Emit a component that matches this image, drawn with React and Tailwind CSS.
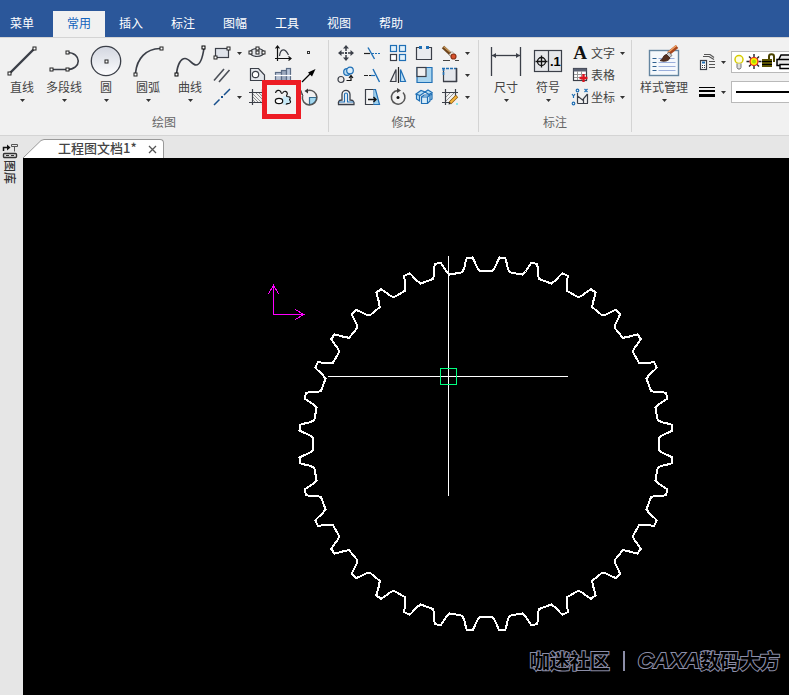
import React, { useState } from 'react';

const MENU = ['常用', '插入', '标注', '图幅', '工具', '视图', '帮助'];

const DARK = '#3b3f48';
const BLUE = '#1f6fb5';

function Icon({ size = 18, label, children }) {
  return (
    <svg width={size} height={size} viewBox={`0 0 ${size} ${size}`} fill="none" stroke={DARK} strokeWidth="1.2" aria-label={label} className="shrink-0 overflow-visible">
      {children}
    </svg>
  );
}

function Node({ x, y, color = '#222' }) {
  return <rect x={x - 1.5} y={y - 1.5} width="3" height="3" fill="#fff" stroke={color} strokeWidth="1" />;
}

function Caret() {
  return (
    <svg width="5" height="3" viewBox="0 0 5 3" className="shrink-0">
      <path d="M0 0h5L2.5 3z" fill="#333" />
    </svg>
  );
}

const big = {
  line: (
    <Icon size={32}>
      <path d="M3.5 28.5 28.5 3.5" strokeWidth="2.4" />
      <Node x={3.5} y={28.5} />
      <Node x={28.5} y={3.5} />
    </Icon>
  ),
  polyline: (
    <Icon size={32}>
      <path d="M3 24.5H19C34 24.5 34 7.5 19 7.5" strokeWidth="1.6" />
      <Node x={3.5} y={24.5} />
      <Node x={19.5} y={24.5} />
      <Node x={19.5} y={7.5} />
    </Icon>
  ),
  circle: (
    <Icon size={32}>
      <defs>
        <linearGradient id="disc" x1="0" y1="0" x2="0" y2="1">
          <stop offset="0" stopColor="#d2d6e0" />
          <stop offset="1" stopColor="#fdfdfe" />
        </linearGradient>
      </defs>
      <circle cx="16" cy="16" r="14.7" fill="url(#disc)" strokeWidth="1.3" />
      <Node x={16.5} y={16.5} />
    </Icon>
  ),
  arc: (
    <Icon size={32}>
      <path d="M3.5 28C5 13 14 4 28 3.5" strokeWidth="1.7" />
      <Node x={3.5} y={29.5} />
      <Node x={29.5} y={3.5} />
    </Icon>
  ),
  curve: (
    <Icon size={32}>
      <path d="M2.5 29C3.5 19 7 13.5 11 13.5C15.5 13.5 18 20 22 20C26.5 20 29 10 30 3" strokeWidth="1.7" />
      <Node x={2.5} y={29.5} color="#000" />
      <Node x={29.5} y={2.5} color="#000" />
    </Icon>
  ),
  size: (
    <Icon size={32}>
      <path d="M1.5 2v29M30.5 2v29" strokeWidth="1.3" />
      <path d="M2 10.5H30" strokeWidth="1.3" />
      <path d="M2 10.5l4-2.5v5zM30 10.5l-4-2.5v5z" fill={DARK} stroke="none" />
    </Icon>
  ),
  symbol: (
    <Icon size={32}>
      <rect x="2.5" y="5.5" width="27" height="21" fill="#e6e7ea" strokeWidth="1.2" />
      <path d="M16.5 5.5v21" />
      <circle cx="9.5" cy="16.5" r="4" stroke="#111" strokeWidth="1.3" />
      <path d="M3.5 16.5h12M9.5 10.5v12" stroke="#111" strokeWidth="1.3" />
      <text x="18" y="21" fontSize="13" fontWeight="700" fontFamily="Liberation Sans, sans-serif" fill="#000" stroke="none">.1</text>
    </Icon>
  ),
  style: (
    <Icon size={32}>
      <rect x="1.5" y="5.5" width="29" height="25" fill="#f4f8fc" stroke="#6485a0" strokeWidth="1.4" />
      <path d="M4.5 13.5h4M4.5 17.5h4M4.5 21.5h4M4.5 25.5h4" stroke="#2f6090" />
      <path d="M10.5 13.5h16M10.5 17.5h17M10.5 21.5h17M10.5 25.5h17" stroke="#9aaedb" />
      <path d="M20.5 8.5 29 1.5" stroke="#a8471c" strokeWidth="4" />
      <path d="M20 7.5 28.5 .5" stroke="#f6a667" strokeWidth="1.2" />
      <path d="M18 10l3-3 3 3.5-3 2.5z" fill="#c9c9c9" stroke="#555" strokeWidth=".7" />
      <path d="M12 15.5C15.5 14.5 14.5 10 18.5 9.5L22 13C20.5 16.5 15.5 17 12 15.5z" fill="#54301f" stroke="#3a2016" strokeWidth=".8" />
    </Icon>
  ),
};

const small = {
  rect: (
    <Icon>
      <rect x="2.5" y="4.5" width="13" height="9" fill="#dfe3ea" />
      <Node x={2.5} y={13.5} />
      <Node x={15.5} y={4.5} />
    </Icon>
  ),
  parallel: (
    <Icon>
      <path d="M1 14.5 11 3M6 16 16.5 4" stroke="#4c5058" strokeWidth="1.6" />
    </Icon>
  ),
  centerline: (
    <Icon>
      <path d="M1 17 6.5 11.5M11 7 17 1" stroke="#174f8c" strokeWidth="1.5" />
      <rect x="8" y="8" width="2" height="2" fill="#174f8c" stroke="none" />
    </Icon>
  ),
  ellipse: (
    <Icon>
      <ellipse cx="9" cy="8.5" rx="7" ry="4" fill="#e4e7ec" />
      <Node x={2.5} y={8.5} />
      <Node x={15.5} y={8.5} />
      <Node x={9.5} y={8.5} />
      <Node x={9.5} y={4.5} />
    </Icon>
  ),
  region: (
    <Icon>
      <path d="M2.5 2.5H10.5L16.5 9V14.5H2.5z" fill="#e4e7ec" />
      <circle cx="7.5" cy="8.5" r="3.2" fill="#fff" />
    </Icon>
  ),
  hatch: (
    <Icon>
      <path d="M4.5 1v16M14.5 1v16M1 4.5h16M1 14.5h16" />
      <path d="M5 6l8 8M8 5l6 6M11 5l3 3M5 9l5 5M5 12l2 2" stroke="#777" strokeWidth=".8" />
    </Icon>
  ),
  formula: (
    <Icon>
      <path d="M3.5 2v12.5H17M1.5 4.5l2-2.5 2 2.5M14.5 12.5l2.5 2-2.5 2M1 14.5h2.5V17" stroke="#111" />
      <path d="M5.5 12C6.5 4 11 4 14.5 11" />
    </Icon>
  ),
  shaft: (
    <Icon>
      <rect x="1.5" y="6.5" width="6" height="8" fill="#b5c0d2" stroke="#5b6c85" />
      <rect x="7.5" y="4.5" width="5" height="11" fill="#9ca9be" stroke="#5b6c85" />
      <rect x="12.5" y="2.5" width="4" height="14" fill="#b9c6d9" stroke="#5b6c85" />
      <path d="M0 9.5h18" stroke="#fff" />
    </Icon>
  ),
  gear: (
    <Icon>
      <path d="M9 8l5 1 3 3-2 4-6 1z" fill="#c9eaf7" stroke="none" />
      <ellipse cx="5" cy="13" rx="3.7" ry="2.7" fill="#fff" stroke="#111" />
      <path d="M1.5 5C2 2 5.500 1.500 6.700 3.500C7 5.500 8 6 9 4.500C10 2.500 13 3 13.300 5.300C13.500 7 11.500 7.500 13 8.500C15 8.500 17 9 16 11C14.500 12 17.500 12.500 16.300 14.500C15 16.500 13 15 12 16.500" stroke="#111" />
    </Icon>
  ),
  point: (
    <Icon>
      <rect x="7.5" y="7.5" width="2" height="2" fill="#fff" stroke="#333" strokeWidth="1" />
    </Icon>
  ),
  arrow: (
    <Icon>
      <path d="M2 16 12 6" stroke="#000" strokeWidth="1.3" />
      <path d="M15.5 3 8 6.500l4 4z" fill="#000" stroke="none" />
    </Icon>
  ),
  detail: (
    <Icon>
      <path d="M9.5 9.5h7A7 7 0 0 1 9.5 16.5z" fill="#a4d8ef" stroke="#356d8f" />
      <path d="M8 2.500A7.300 7.300 0 1 1 2.500 8" stroke="#555" strokeWidth="1.500" />
      <path d="M-2 8 .500 1.500 3 8M-1 6h3" stroke="#333" strokeWidth="1" />
      <path d="M4.500 3 8 .500v5z" fill="#333" stroke="none" />
    </Icon>
  ),
  move: (
    <Icon>
      <path d="M9 1l3 3.5H6zM9 17l3-3.5H6zM1 9l3.5-3v6zM17 9l-3.500-3v6z" fill={DARK} stroke="none" />
      <path d="M9 4v3M9 11v3M4 9h3M11 9h3" strokeWidth="1.5" />
      <rect x="8" y="8" width="2" height="2" fill={DARK} stroke="none" />
    </Icon>
  ),
  trim: (
    <Icon>
      <path d="M1 9.5h6" stroke="#222" />
      <path d="M5 3.5 11.5 15" stroke={BLUE} strokeWidth="1.4" />
      <path d="M9 9.5h8" stroke={BLUE} strokeDasharray="2 1" />
    </Icon>
  ),
  array: (
    <Icon>
      <rect x="1.5" y="1.5" width="6" height="6" fill="#e2f1fb" stroke={BLUE} />
      <rect x="10.5" y="1.5" width="6" height="6" fill="#e2f1fb" stroke={BLUE} />
      <rect x="1.5" y="10.5" width="6" height="6" fill="#fff" />
      <rect x="10.5" y="10.5" width="6" height="6" fill="#e2f1fb" stroke={BLUE} />
    </Icon>
  ),
  breakAt: (
    <Icon>
      <path d="M4 3.5H1.5v12h15v-12H14" fill="#e9ebef" />
      <path d="M4 3.5h2M12 3.5h2" stroke="#333" />
      <rect x="4" y="2" width="3" height="3" fill={BLUE} stroke="none" />
      <rect x="11" y="2" width="3" height="3" fill={BLUE} stroke="none" />
    </Icon>
  ),
  brush: (
    <Icon>
      <path d="M2 3 10 10.5" stroke="#6d431b" strokeWidth="3.4" />
      <path d="M2.5 2.5 9 8" stroke="#c99b5c" strokeWidth="1.2" />
      <path d="M8 10.5l3-3 2 2-3 3z" fill="#f0ede0" stroke="#777" strokeWidth=".6" />
      <circle cx="12.5" cy="12.5" r="2.5" fill="#d9502a" stroke="#8d3216" />
      <path d="M2 16.5h7M14 16.5h4" stroke="#444" />
    </Icon>
  ),
  copy: (
    <Icon>
      <circle cx="10" cy="6" r="3.3" fill="#b9dcf2" stroke={BLUE} />
      <circle cx="13" cy="4.5" r="3.3" fill="#dceefa" stroke={BLUE} />
      <circle cx="4" cy="13.5" r="3" fill="#eee" />
      <path d="M9.500 14.500h4.500V11M12 12l2-2.500 2 2.500" stroke="#111" />
    </Icon>
  ),
  extend: (
    <Icon>
      <path d="M1 9.5h4M6 9.5h2" stroke="#222" />
      <path d="M8 9.5h4" stroke={BLUE} />
      <path d="M10 3 16.5 16" stroke={BLUE} strokeWidth="1.4" />
    </Icon>
  ),
  mirror: (
    <Icon>
      <path d="M7 3.5v12H1.500z" fill="#e8e8ea" />
      <path d="M11.500 3.500v12h5z" fill="#bfe0f5" stroke={BLUE} />
      <path d="M9.500 1v16" stroke="#222" />
    </Icon>
  ),
  scale: (
    <Icon>
      <path d="M2 1.500h15v15h-15z" fill="#a9d5ef" stroke={BLUE} />
      <rect x="2" y="1.500" width="9" height="9" fill="#f1f1f1" />
    </Icon>
  ),
  stretch: (
    <Icon>
      <path d="M2.500 2v13.500h13V2" fill="#e4e7ec" />
      <path d="M1 2.500h16M2.500 2v8" stroke={BLUE} strokeWidth="1.600" strokeDasharray="3 1" />
      <path d="M15.500 2v14M2 15.500h14" strokeWidth="1.500" />
    </Icon>
  ),
  offset: (
    <Icon>
      <path d="M1.500 16.500h15.500c.5-3-1-4.500-4-4.500V6.500c0-5.500-8-5.500-8 0V12c-3 0-4 1.500-3.500 4.500z" strokeWidth="1.300" fill="#f6f6f6" />
      <path d="M2 14h5.500V6.500c0-2 3-2 3 0V14h6" stroke={BLUE} strokeWidth="1.200" />
    </Icon>
  ),
  stretchRight: (
    <Icon>
      <path d="M10.500 1.500h2l4 15h-6z" fill="#9fd1ee" stroke={BLUE} />
      <path d="M10.500 1.500h-8v15h8" fill="#f4f4f4" />
      <path d="M5 11.500h8M10.500 9l2.500 2.500-2.500 2.500" stroke="#111" strokeWidth="1.400" />
    </Icon>
  ),
  rotate: (
    <Icon>
      <path d="M9 2.500A6.800 6.800 0 1 0 14 4.500" stroke="#555" strokeWidth="1.500" />
      <path d="M8 0l4 2.500L8 5z" fill="#444" stroke="none" />
      <circle cx="9" cy="9.500" r="1.500" fill="#111" stroke="none" />
    </Icon>
  ),
  explode: (
    <Icon>
      <path d="M1 6 6 2.500l4 1.500L5 7.500zM10 4l3-2 4 2.500-3 2zM1.500 6.500V11l3 2V8M15.500 7l1.500-1v5l-1.500 1" fill="#b8dff5" stroke={BLUE} />
      <path d="M6.500 9l2.500-2h6v6l-2.500 2.500h-6z" fill="#d6ecf9" stroke={BLUE} />
      <path d="M6.500 9h6v6.500M12.500 9 15 7" stroke={BLUE} />
    </Icon>
  ),
  editHatch: (
    <Icon>
      <path d="M4.500 1v16M14.500 1v8M1 4.500h16M1 14.500h9" />
      <path d="M5 13l8-8M5 9l4-4M9 13l5-5" stroke="#777" strokeWidth=".8" />
      <path d="M9 15 16 8" stroke="#8d5a10" strokeWidth="3.400" />
      <path d="M9.500 14.500 15.500 8.500" stroke="#f7b63d" strokeWidth="2" />
      <path d="M7.500 16.500l.5-2.500 2 2z" fill="#222" stroke="none" />
      <path d="M15 16h2" stroke="#26dfe8" />
    </Icon>
  ),
  table: (
    <Icon>
      <rect x="2.500" y="2.500" width="13" height="12" fill="#fff" />
      <path d="M2.500 4h13" strokeWidth="3" stroke="#5a6172" />
      <path d="M3 8.500h12M3 11.500h12M6.500 5v9M10.500 5v9" stroke="#999" strokeWidth="1" />
      <path d="M12.500 8v8M8.500 12h8" stroke="#dd1620" strokeWidth="2.400" />
    </Icon>
  ),
  coord: (
    <Icon>
      <path d="M6.500 5v10.500M6.500 15.500H17M6.500 8l5 4 5-6M12.500 11v5M16.500 6v9" />
      <path d="M1 6l1.500 2L4 6M2.500 8v2M13.500 1l3 3M16.500 1l-3 3" stroke={BLUE} />
      <circle cx="6.500" cy="2.500" r="1.300" stroke={BLUE} />
      <circle cx="2.500" cy="15.500" r="1.300" stroke={BLUE} />
    </Icon>
  ),
  layer: (
    <Icon>
      <path d="M5 3.500h6l5 3M6 1.500h6l4 3M11 8.500h6M11 11.500h6M11 14.500h6" stroke="#555" />
      <rect x="2.500" y="7.500" width="6" height="9" fill="#fff" />
      <path d="M4 9.500h3" stroke={BLUE} strokeWidth="2" />
      <path d="M4 12.500h1M6 12.500h1M4 14.500h1M6 14.500h1" />
    </Icon>
  ),
  width: (
    <Icon>
      <path d="M1 4.500h16" stroke="#000" strokeWidth="1" />
      <path d="M1 8h16" stroke="#000" strokeWidth="2" />
      <path d="M1 12.500h16" stroke="#000" strokeWidth="3" />
    </Icon>
  ),
};

function BigButton({ icon, label, wide }) {
  return (
    <button className={wide ? 'flex w-16 flex-col items-center pt-[5px]' : 'flex w-[42px] flex-col items-center pt-[5px]'}>
      {big[icon]}
      <span className="mt-[2px] whitespace-nowrap leading-4">{label}</span>
      <span className="flex h-[10px] items-center"><Caret /></span>
    </button>
  );
}

function SmallButton({ icon, label }) {
  return (
    <button aria-label={label} className="flex h-[22px] items-center justify-center">
      {small[icon]}
    </button>
  );
}

function More({ label }) {
  return (
    <button aria-label={label} className="flex h-[22px] items-center justify-center">
      <Caret />
    </button>
  );
}

function Group({ title, children, last }) {
  return (
    <section className={last ? 'min-w-0 flex-1 overflow-hidden' : 'shrink-0 border-r border-[#d4d4d4]'}>
      <div className="flex h-[74px]">{children}</div>
      <h2 className="h-[18px] text-center leading-4 text-[#666]">{title}</h2>
    </section>
  );
}

function LayerIcons() {
  return (
    <svg width="80" height="18" viewBox="0 0 80 18" fill="none" className="shrink-0">
      <circle cx="7" cy="6.500" r="4" fill="#fffde0" stroke="#d6cc00" strokeWidth="1.500" />
      <path d="M5 10.500v4l1 1.500h2l1-1.500v-4" fill="#ddd" stroke="#777" />
      <path d="M22 1v3M22 13v3M14.500 8.500h3M26.500 8.500h3M17 3.500l2 2M27 3.500l-2 2M17 13.500l2-2M27 13.500l-2-2" stroke="#222" strokeWidth="1.400" />
      <circle cx="22" cy="8.500" r="4" fill="#ffef00" stroke="#e02020" strokeWidth="1.200" />
      <circle cx="22" cy="8.500" r="2" fill="#a7e000" />
      <rect x="30" y="6" width="10" height="8" fill="#5a5200" />
      <path d="M30 8.500h10M30 11.500h10" stroke="#000" />
      <path d="M37 6V3.500c0-3 5-3 5 0V9" stroke="#4a4300" strokeWidth="2" />
      <path d="M47 6l2-4h13v4M45 6.500h18v6H45z" fill="#e9e9e9" stroke="#000" strokeWidth="1.500" />
      <path d="M48 11.500h12v4H48z" fill="#fff" stroke="#000" strokeWidth="1.400" />
    </svg>
  );
}

function Ribbon() {
  return (
    <div className="flex overflow-hidden border-y border-[#d4d4d4] bg-[#f1f1f1] pt-[2px] pb-[3px] text-xs text-[#444]">
      <Group title="绘图">
        <div className="flex pl-px">
          <BigButton icon="line" label="直线" />
          <BigButton icon="polyline" label="多段线" />
          <BigButton icon="circle" label="圆" />
          <BigButton icon="arc" label="圆弧" />
          <BigButton icon="curve" label="曲线" />
        </div>
        <div className="grid grid-cols-[18px_17px_26px_26px_26px] content-start justify-items-start pt-[2px] pr-[2px] pl-[2px]">
          <SmallButton icon="rect" label="矩形" />
          <span className="justify-self-center"><More label="矩形选项" /></span>
          <SmallButton icon="ellipse" label="椭圆" />
          <SmallButton icon="formula" label="公式曲线" />
          <SmallButton icon="point" label="点" />
          <SmallButton icon="parallel" label="平行线" />
          <span />
          <SmallButton icon="region" label="局部放大" />
          <SmallButton icon="shaft" label="孔/轴" />
          <SmallButton icon="arrow" label="箭头" />
          <SmallButton icon="centerline" label="中心线" />
          <span className="justify-self-center"><More label="中心线选项" /></span>
          <SmallButton icon="hatch" label="剖面线" />
          <div className="relative">
            <SmallButton icon="gear" label="齿轮" />
            <div className="pointer-events-none absolute -top-[6px] -left-3 h-[39px] w-[39px] border-[5px] border-[#ed1c24]" />
          </div>
          <SmallButton icon="detail" label="局部视图" />
        </div>
      </Group>
      <Group title="修改">
        <div className="grid grid-cols-[26px_26px_26px_26px_26px_8px] content-start pt-[2px] pr-[7px] pl-1">
          <SmallButton icon="move" label="平移" />
          <SmallButton icon="trim" label="裁剪" />
          <SmallButton icon="array" label="阵列" />
          <SmallButton icon="breakAt" label="打断" />
          <SmallButton icon="brush" label="特性匹配" />
          <More label="特性匹配选项" />
          <SmallButton icon="copy" label="平移复制" />
          <SmallButton icon="extend" label="延伸" />
          <SmallButton icon="mirror" label="镜像" />
          <SmallButton icon="scale" label="缩放" />
          <SmallButton icon="stretch" label="圆角" />
          <More label="圆角选项" />
          <SmallButton icon="offset" label="等距线" />
          <SmallButton icon="stretchRight" label="拉伸" />
          <SmallButton icon="rotate" label="旋转" />
          <SmallButton icon="explode" label="分解" />
          <SmallButton icon="editHatch" label="编辑剖面线" />
          <More label="编辑选项" />
        </div>
      </Group>
      <Group title="标注">
        <div className="flex pl-[6px]">
          <BigButton icon="size" label="尺寸" />
          <BigButton icon="symbol" label="符号" />
        </div>
        <div className="flex flex-col pt-[2px] pr-[6px] pl-[2px]">
          <button className="flex h-[22px] items-center">
            <span className="w-[18px] text-center font-['Liberation_Serif',serif] text-[19px] leading-[22px] font-bold text-[#111]">A</span>
            <span className="mx-[2px]">文字</span>
            <span className="ml-[3px]"><Caret /></span>
          </button>
          <button className="flex h-[22px] items-center">
            {small.table}
            <span className="mx-[2px]">表格</span>
          </button>
          <button className="flex h-[22px] items-center">
            {small.coord}
            <span className="mx-[2px]">坐标</span>
            <span className="ml-[3px]"><Caret /></span>
          </button>
        </div>
      </Group>
      <Group last>
        <div className="flex">
          <BigButton icon="style" label="样式管理" wide />
          <div className="flex flex-col gap-2 pt-[11px]">
            <div className="flex items-center">
              <span className="ml-[2px] flex w-[18px]">{small.layer}</span>
              <span className="flex w-[15px] justify-center"><More label="图层选项" /></span>
              <button aria-label="图层" className="flex h-[22px] w-60 items-center overflow-hidden border border-[#b9b9b9] bg-white"><LayerIcons /></button>
            </div>
            <div className="flex items-center">
              <span className="ml-[2px] flex w-[18px]">{small.width}</span>
              <span className="flex w-[15px] justify-center"><More label="线宽选项" /></span>
              <button aria-label="线型" className="flex h-[22px] w-60 items-center border border-[#b9b9b9] bg-white px-1">
                <span className="h-[2px] w-full bg-black" />
              </button>
            </div>
          </div>
        </div>
      </Group>
    </div>
  );
}

// half tooth profile: [radius, degrees from the tooth axis]
const FLANK = [[173.3, 2.85], [177, 2.1], [184.3, 1.25], [187, 0.9]];

function gearPoints(cx, cy, teeth) {
  const profile = [
    ...FLANK.map(([r, a]) => [r, -a]),
    ...[...FLANK].reverse(),
  ];
  const points = [];
  for (let i = 0; i < teeth; i++) {
    const axis = (i + 0.5) * (360 / teeth);
    profile.forEach(([r, a]) => {
      const t = ((axis + a) * Math.PI) / 180;
      points.push(`${(cx + r * Math.sin(t)).toFixed(1)},${(cy - r * Math.cos(t)).toFixed(1)}`);
    });
  }
  return points.join(' ');
}

function Drawing() {
  return (
    <svg width="766" height="537" viewBox="0 0 766 537" fill="none" className="block" shapeRendering="crispEdges">
      <polygon points={gearPoints(463, 286, 36)} stroke="#fff" strokeWidth="2" />
      <path d="M250.500 157V127M245.500 136l5-9 5 9M250 156.500h31M272 151.500l9 5-9 5" stroke="#ff00ff" />
      <path d="M305 218.500h240M425.500 98v240" stroke="#fff" />
      <rect x="417.500" y="210.500" width="16" height="16" stroke="#00ff7f" />
    </svg>
  );
}

function App() {
  const [tab, setTab] = useState('常用');

  return (
    <div className="flex h-screen flex-col overflow-hidden bg-[#e6e6e6] font-['Noto_Sans_CJK_SC',sans-serif]">
      <nav className="flex h-[37px] shrink-0 items-end bg-[#2b579a] text-xs text-white">
        <button className="mr-[9px] h-[26px] w-11 pb-[2px]">菜单</button>
        {MENU.map((name) => (
          <button
            key={name}
            onClick={() => setTab(name)}
            className={name === tab ? 'h-[26px] w-[52px] bg-[#f1f1f1] pb-[2px] text-[#1464bd]' : 'h-[26px] w-[52px] pb-[2px]'}
          >
            {name}
          </button>
        ))}
      </nav>
      <Ribbon />
      <div className="flex min-h-0 flex-1">
        <aside className="flex w-[23px] shrink-0 flex-col pt-[7px] pl-[2px]">
          <svg width="16" height="17" viewBox="0 0 16 17" fill="none" stroke="#333">
            <path d="M1.500 8V4.500h5" strokeWidth="1.500" stroke="#111" />
            <path d="M5 1.500l3.500 3L5 7.500z" fill="#111" stroke="none" />
            <path d="M9.500 1.500h6v2h-6zM12.500 3.500v5" stroke="#555" />
            <rect x="1.500" y="10.500" width="13" height="4" rx="1" fill="#ddd" strokeWidth="1.400" />
            <path d="M4 12.500h3M9 12.500h3" />
          </svg>
          <button className="w-4 text-xs leading-4 font-medium text-[#333] [text-orientation:sideways] [writing-mode:vertical-rl]">图库</button>
        </aside>
        <main className="flex min-w-0 flex-1 flex-col">
          <div className="flex h-[22px] shrink-0 items-end">
            <svg width="21" height="19" viewBox="0 0 21 19" className="shrink-0">
              <path d="M0 19 18 1.500 21 .500V19z" fill="#fff" />
              <path d="M0 19 18 1.500 21 .500" fill="none" stroke="#999" />
            </svg>
            <div className="flex h-[19px] items-center rounded-tr border-t border-r border-[#999] bg-white pr-[6px] pl-[14px] text-[13px] leading-4 font-medium text-[#444]">
              <span className="pb-[2px]">工程图文档1*</span>
              <button aria-label="关闭" className="ml-[11px]">
                <svg width="9" height="9" viewBox="0 0 9 9" stroke="#555" strokeWidth="1.300">
                  <path d="M1 1l7 7M8 1 1 8" />
                </svg>
              </button>
            </div>
          </div>
          <div className="relative min-h-0 flex-1 overflow-hidden bg-black">
            <Drawing />
            <div className="absolute right-[9px] bottom-5 flex items-center text-[20px] leading-7 font-bold whitespace-nowrap text-black [paint-order:stroke_fill] [-webkit-text-stroke:2px_#8c8ea8]">
              <span>咖迷社区</span>
              <span className="mx-[13px] h-5 w-[2px] bg-[#8c8ea8]" />
              <span className="font-['Liberation_Sans',sans-serif] text-[22px] italic">CAXA</span>
              <span>数码大方</span>
            </div>
          </div>
        </main>
      </div>
    </div>
  );
}

export default App;
